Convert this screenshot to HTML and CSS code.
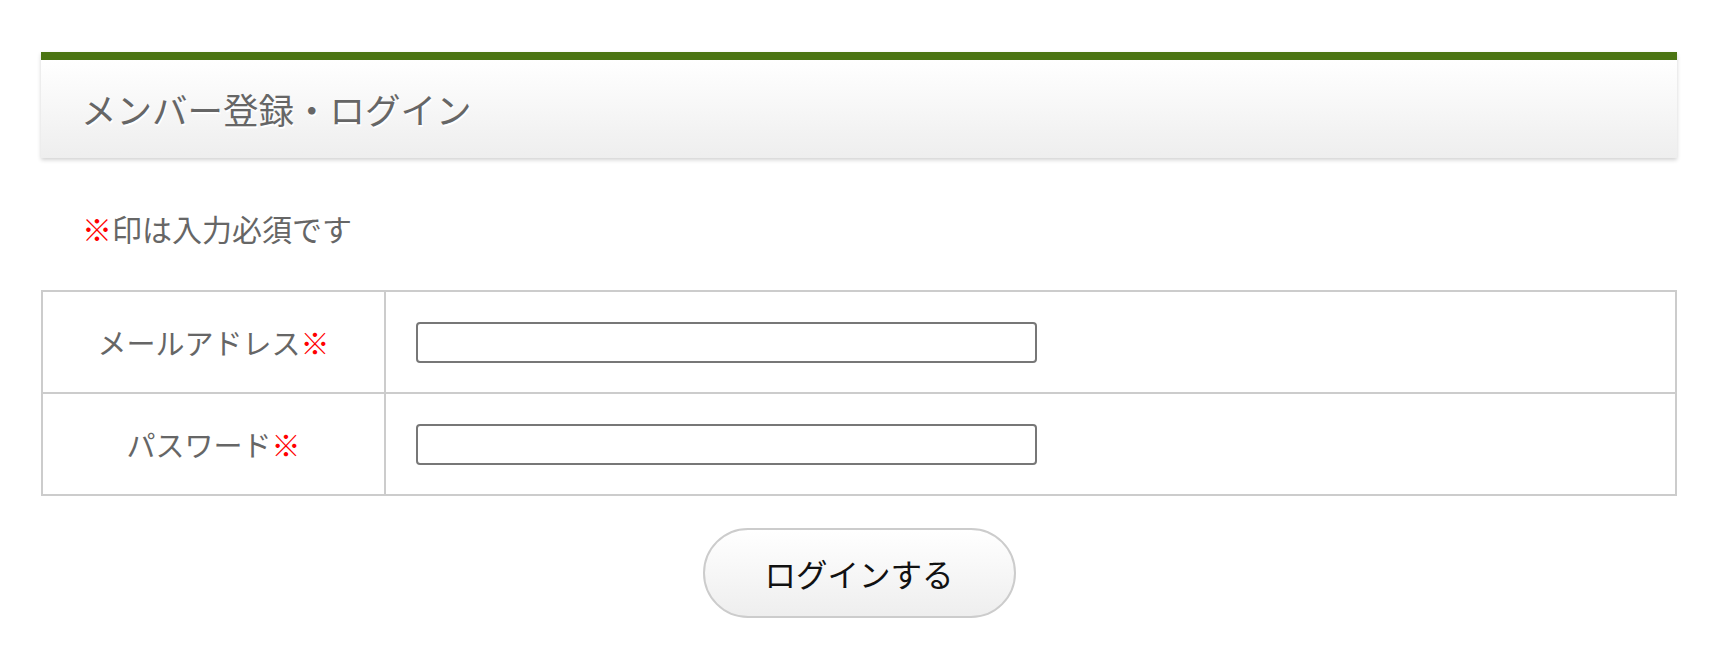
FILE: index.html
```html
<!DOCTYPE html>
<html lang="ja">
<head>
<meta charset="utf-8">
<title>メンバー登録・ログイン</title>
<link rel="stylesheet" href="styles.css">
</head>
<body>
<div class="wrap">
  <div class="page-head">
    <h1 class="page-title">メンバー登録・ログイン</h1>
  </div>
  <p class="note"><span class="req">※</span>印は入力必須です</p>
  <form class="login-form">
    <div class="form-table">
      <div class="form-row">
        <div class="form-label">メールアドレス<span class="req">※</span></div>
        <div class="form-field"><input class="text-input" type="text"></div>
      </div>
      <div class="form-row">
        <div class="form-label">パスワード<span class="req">※</span></div>
        <div class="form-field"><input class="text-input" type="password"></div>
      </div>
    </div>
    <div class="actions">
      <button class="btn" type="button">ログインする</button>
    </div>
  </form>
</div>
</body>
</html>
```

FILE: styles.css
```css
html, body {
  margin: 0;
  padding: 0;
  background: #fff;
}
body {
  font-family: "Noto Sans CJK JP", "Noto Sans", sans-serif;
  color: #666;
}
.wrap {
  width: 1636px;
  margin-left: 41px;
  padding-top: 52px;
}
.page-head {
  border-top: 8px solid #4b7413;
  height: 98px;
  background: linear-gradient(to bottom, #ffffff 0%, #eeeeee 100%);
  box-shadow: 0 2px 4px rgba(0, 0, 0, 0.18);
  display: flex;
  align-items: center;
  padding-left: 40px;
}
.page-title {
  margin: 0;
  font-size: 35.5px;
  font-weight: normal;
  color: #666;
  text-shadow: 1px 2px 0 #fff;
  line-height: 1;
}
.note {
  margin: 49px 0 0;
  padding-left: 41px;
  font-size: 30px;
  line-height: 42px;
}
.req {
  color: #f00;
}
.login-form {
  margin-top: 41px;
}
.form-table {
  border: 2px solid #ccc;
}
.form-row {
  display: grid;
  grid-template-columns: 341px 1fr;
  height: 100px;
}
.form-row + .form-row {
  border-top: 2px solid #ccc;
}
.form-label {
  display: flex;
  align-items: center;
  justify-content: center;
  font-size: 29px;
  color: #666;
}
.form-field {
  border-left: 2px solid #ccc;
  display: flex;
  align-items: center;
  padding-left: 30px;
}
.text-input {
  box-sizing: border-box;
  width: 621px;
  height: 41px;
  border: 2px solid #777;
  border-radius: 4px;
  background: #fff;
  margin: 0;
}
.actions {
  display: flex;
  justify-content: center;
  margin-top: 32px;
}
.btn {
  box-sizing: border-box;
  width: 313px;
  height: 90px;
  border: 2px solid #ccc;
  border-radius: 45px;
  background: linear-gradient(to bottom, #ffffff 0%, #eeeeee 100%);
  font-family: "Noto Sans CJK JP", "Noto Sans", sans-serif;
  font-size: 31.5px;
  color: #111;
  cursor: pointer;
  padding: 0;
}
```
